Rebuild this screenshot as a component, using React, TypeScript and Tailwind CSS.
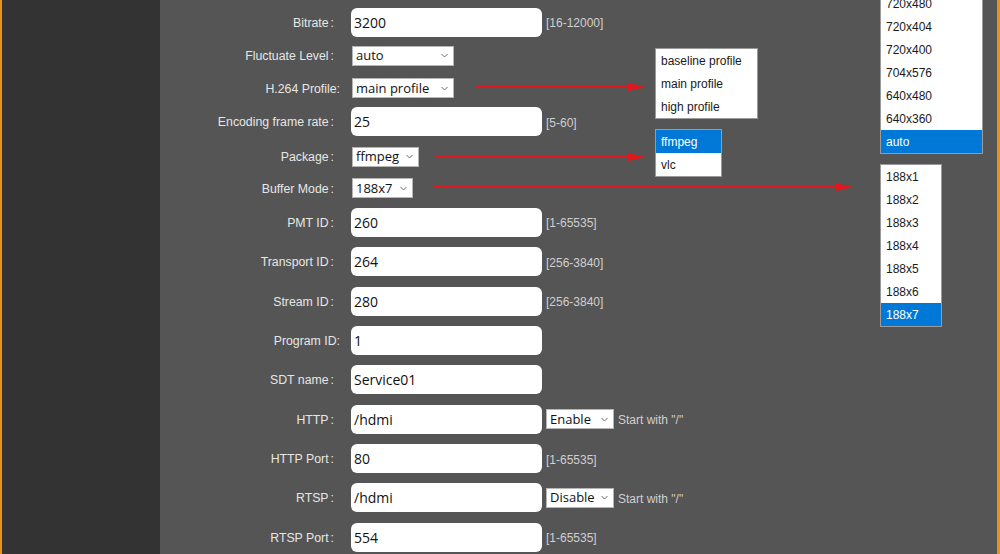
import React from 'react';

type Row = {
  label: string;
  h: number;
  kind: 'input' | 'select';
  value: string;
  width?: number;
  hint?: string;
  toggle?: string;
  tight?: boolean;
};

const rows: Row[] = [
  { label: 'Bitrate', h: 34, kind: 'input', value: '3200', hint: '[16-12000]' },
  { label: 'Fluctuate Level', h: 33, kind: 'select', value: 'auto', width: 102 },
  { label: 'H.264 Profile', h: 32, kind: 'select', value: 'main profile', width: 102, tight: true },
  { label: 'Encoding frame rate', h: 35, kind: 'input', value: '25', hint: '[5-60]' },
  { label: 'Package', h: 35, kind: 'select', value: 'ffmpeg', width: 67 },
  { label: 'Buffer Mode', h: 28, kind: 'select', value: '188x7', width: 61 },
  { label: 'PMT ID', h: 40, kind: 'input', value: '260', hint: '[1-65535]' },
  { label: 'Transport ID', h: 39, kind: 'input', value: '264', hint: '[256-3840]' },
  { label: 'Stream ID', h: 40, kind: 'input', value: '280', hint: '[256-3840]' },
  { label: 'Program ID', h: 39, kind: 'input', value: '1', tight: true },
  { label: 'SDT name', h: 39, kind: 'input', value: 'Service01' },
  { label: 'HTTP', h: 40, kind: 'input', value: '/hdmi', toggle: 'Enable' },
  { label: 'HTTP Port', h: 39, kind: 'input', value: '80', hint: '[1-65535]' },
  { label: 'RTSP', h: 39, kind: 'input', value: '/hdmi', toggle: 'Disable' },
  { label: 'RTSP Port', h: 40, kind: 'input', value: '554', hint: '[1-65535]' },
];

const arial = "font-['Liberation_Sans',Arial,sans-serif]";
const ui = "font-['Open_Sans','Noto_Sans',sans-serif]";

const Chevron = () => (
  <svg width="7" height="5" viewBox="0 0 7 5" className="shrink-0">
    <path d="M0.5 1 L3.5 4 L6.5 1" fill="none" stroke="#6b6b6b" strokeWidth="1" />
  </svg>
);

const FakeSelect = ({ value, width }: { value: string; width: number }) => (
  <div
    style={{ width }}
    className={`h-[20px] bg-white border border-[#b5b5b5] flex items-center justify-between pl-[3px] pr-[5px] text-[13px] text-[#111] ${ui}`}
  >
    <span className="leading-none">{value}</span>
    <Chevron />
  </div>
);

const ListBox = ({
  items,
  active,
  className,
}: {
  items: string[];
  active: string;
  className: string;
}) => (
  <div className={`absolute bg-white border border-[#9a9a9a] text-[12px] ${arial} ${className}`}>
    {items.map((it) => (
      <div
        key={it}
        className={`h-[23px] flex items-center px-[5px] ${
          it === active ? 'bg-[#0078d7] text-white' : 'text-[#1a1a1a]'
        }`}
      >
        {it}
      </div>
    ))}
  </div>
);

export default function App() {
  return (
    <div className="relative w-[1000px] h-[554px] flex overflow-hidden bg-[#555555]">
      <div className="w-[2px] bg-[#e8921c]" />
      <div className="w-[158px] bg-[#333333]" />

      {/* encoder settings form */}
      <div className="flex-1 bg-[#555555] pt-[5px]">
        {rows.map((r) => (
          <div key={r.label} style={{ height: r.h }} className="flex items-center">
            <div
              className={`w-[181px] pt-[2px] flex justify-end text-[12.3px] text-[#e6e6e6] ${arial} ${
                r.tight ? 'pr-[1px]' : 'pr-[7px]'
              }`}
            >
              {r.tight ? (
                <span>{r.label}:</span>
              ) : (
                <>
                  <span>{r.label}</span>
                  <span className="ml-[2px]">:</span>
                </>
              )}
            </div>
            {r.kind === 'input' ? (
              <>
                <div
                  className={`ml-[10px] w-[191px] h-[29px] bg-white rounded-[6px] flex items-center pl-[3px] text-[14px] text-[#111] ${ui}`}
                >
                  {r.value}
                </div>
                {r.hint && (
                  <span className={`ml-[4px] mt-[2px] text-[12px] text-[#cfcfcf] ${arial}`}>{r.hint}</span>
                )}
                {r.toggle && (
                  <>
                    <div className="ml-[4px]">
                      <FakeSelect value={r.toggle} width={68} />
                    </div>
                    <span className={`ml-[4px] mt-[2px] text-[12px] text-[#cfcfcf] ${arial}`}>Start with "/"</span>
                  </>
                )}
              </>
            ) : (
              <div className="ml-[11px]">
                <FakeSelect value={r.value} width={r.width ?? 100} />
              </div>
            )}
          </div>
        ))}
      </div>

      <div className="w-[3px] bg-[#e8921c]" />

      {/* opened option lists */}
      <ListBox
        className="left-[655px] top-[48px] w-[103px]"
        items={['baseline profile', 'main profile', 'high profile']}
        active=""
      />
      <ListBox className="left-[655px] top-[129px] w-[67px]" items={['ffmpeg', 'vlc']} active="ffmpeg" />
      <ListBox
        className="left-[880px] top-[-9px] w-[103px]"
        items={['720x480', '720x404', '720x400', '704x576', '640x480', '640x360', 'auto']}
        active="auto"
      />
      <ListBox
        className="left-[880px] top-[164px] w-[62px]"
        items={['188x1', '188x2', '188x3', '188x4', '188x5', '188x6', '188x7']}
        active="188x7"
      />

      {/* pointer arrows */}
      <svg className="absolute inset-0 pointer-events-none" width="1000" height="554">
        <g stroke="#e0171b" strokeWidth="2">
          <line x1="475" y1="87" x2="632" y2="87" />
          <line x1="435" y1="157" x2="632" y2="157" />
          <line x1="433" y1="187" x2="840" y2="187" />
        </g>
        <g fill="#e0171b">
          <polygon points="628,83 646,87 628,91" />
          <polygon points="628,153 646,157 628,161" />
          <polygon points="836,183 853,187 836,191" />
        </g>
      </svg>
    </div>
  );
}
